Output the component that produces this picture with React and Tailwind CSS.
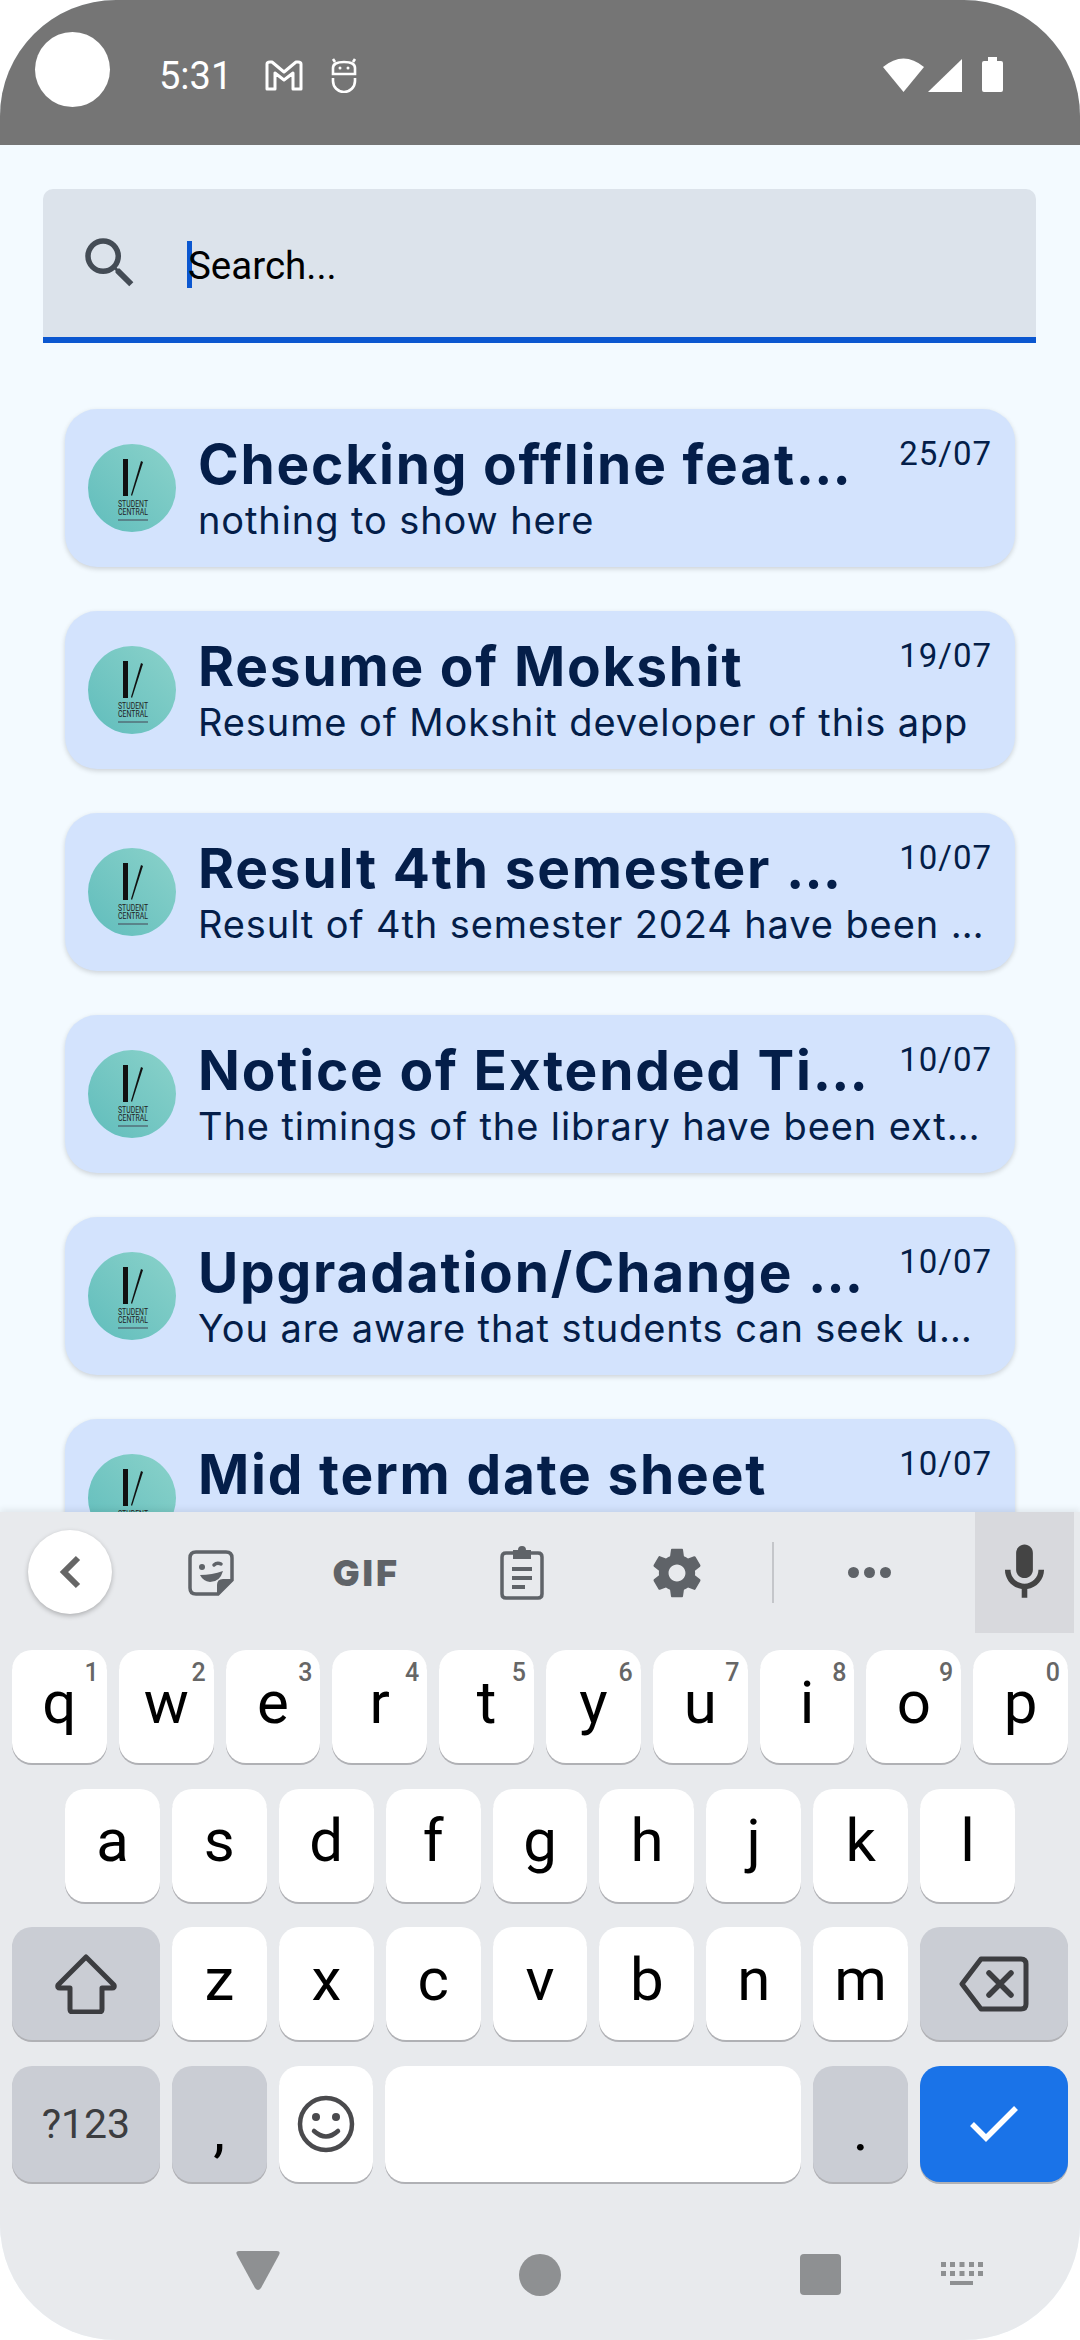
import React from 'react';

// --- data ---
const NOTICES = [
  { title: 'Checking offline feat…', body: 'nothing to show here', date: '25/07' },
  { title: 'Resume of Mokshit', body: 'Resume of Mokshit developer of this app', date: '19/07' },
  { title: 'Result 4th semester …', body: 'Result of 4th semester 2024 have been …', date: '10/07' },
  { title: 'Notice of Extended Ti…', body: 'The timings of the library have been ext…', date: '10/07' },
  { title: 'Upgradation/Change …', body: 'You are aware that students can seek u…', date: '10/07' },
  { title: 'Mid term date sheet', body: '', date: '10/07' }, // body sits behind the keyboard
];

const ROW_1 = [['q', '1'], ['w', '2'], ['e', '3'], ['r', '4'], ['t', '5'], ['y', '6'], ['u', '7'], ['i', '8'], ['o', '9'], ['p', '0']];
const ROW_2 = ['a', 's', 'd', 'f', 'g', 'h', 'j', 'k', 'l'];
const ROW_3 = ['z', 'x', 'c', 'v', 'b', 'n', 'm'];

// --- status bar ---
const StatusBar = () => (
  <div className="h-[145px] shrink-0 bg-[#757575] flex items-start text-white">
    <div className="ml-[35px] mt-[32px] w-[75px] h-[75px] rounded-full bg-white" />
    <span className="ml-[49px] mt-[54px] text-[38px] leading-[44px]">5:31</span>
    <svg className="ml-[33px] mt-[60px]" width="38" height="31" viewBox="0 0 38 31" fill="none" stroke="white" strokeWidth="3" strokeLinejoin="round">
      <path d="M2 4 Q2 2 5 2 H7 L19 12 L31 2 H33 Q36 2 36 4 V29 H28 V13 L19 20 L10 13 V29 H2 Z" />
    </svg>
    <svg className="ml-[28px] mt-[58px]" width="26" height="35" viewBox="0 0 26 35" fill="none" stroke="white" strokeWidth="2.6">
      <path d="M2 16 V10 Q2 4 13 4 Q24 4 24 10 V16 Z" />
      <path d="M2 20 V23 A11 11 0 0 0 24 23 V20" />
      <path d="M4 4 L2 1 M22 4 L24 1" />
      <circle cx="9" cy="10" r="1.5" fill="white" stroke="none" />
      <circle cx="17" cy="10" r="1.5" fill="white" stroke="none" />
    </svg>
    <div className="ml-auto mr-[77px] mt-[57px] flex items-start">
      <svg width="41" height="35" viewBox="0 0 41 35" fill="white">
        <path d="M0 10 Q20.5 -7 41 10 L20.5 35 Z" />
      </svg>
      <svg className="ml-[4px] mt-[2px]" width="34" height="33" viewBox="0 0 34 33" fill="white">
        <path d="M34 0 V33 H0 Z" />
      </svg>
      <svg className="ml-[20px]" width="21" height="35" viewBox="0 0 21 35" fill="white">
        <path d="M6 0 H15 V4 H19 Q21 4 21 6 V33 Q21 35 19 35 H2 Q0 35 0 33 V6 Q0 4 2 4 H6 Z" />
      </svg>
    </div>
  </div>
);

// --- search ---
const SearchBox = () => (
  <div className="ml-[43px] mr-[44px] h-[154px] shrink-0 bg-[#DCE3EB] rounded-t-[10px] border-b-[6px] border-[#0B57D0] flex items-center">
    <svg className="ml-[34px]" width="66" height="66" viewBox="0 0 24 24" fill="#444C55">
      <path d="M15.5 14h-.79l-.28-.27A6.471 6.471 0 0 0 16 9.5 6.5 6.5 0 1 0 9.5 16c1.61 0 3.09-.59 4.23-1.57l.27.28v.79l5 4.99L20.49 19l-4.99-5zm-6 0C7.01 14 5 11.99 5 9.5S7.01 5 9.5 5 14 7.01 14 9.5 11.99 14 9.5 14z" />
    </svg>
    <div className="relative ml-[44px] mt-[6px] flex items-center">
      <span className="absolute left-0 top-[-2px] w-[5px] h-[47px] bg-[#0B57D0]" />
      <span className="relative text-[38.5px] leading-[46px] text-black pl-[1px]">Search...</span>
    </div>
  </div>
);

// --- notice card ---
const LogoBadge = () => (
  <div className="w-[88px] h-[88px] shrink-0 rounded-full bg-linear-to-tr from-[#60BDBC] to-[#8AD2CA]">
    <svg width="88" height="88" viewBox="0 0 88 88">
      <rect x="35" y="15" width="5" height="37" fill="#111" />
      <path d="M53 17 L55 18 L44 52 L43 51 Z" fill="#111" />
      <text x="30" y="62.5" fontSize="8.5" textLength="30" lengthAdjust="spacingAndGlyphs" fontFamily="Roboto" fill="#222">STUDENT</text>
      <text x="30" y="71" fontSize="8.5" textLength="30" lengthAdjust="spacingAndGlyphs" fontFamily="Roboto" fill="#222">CENTRAL</text>
      <rect x="30" y="75.5" width="30" height="1" fill="#445" />
    </svg>
  </div>
);

const NoticeCard = ({ title, body, date }) => (
  <div className="h-[158px] shrink-0 rounded-[32px] bg-[#D3E3FD] shadow-[0_2px_5px_rgba(0,0,0,0.16)] flex items-center pl-[23px] pr-[23px]">
    <LogoBadge />
    <div className="ml-[22px] flex-1 min-w-0 text-[#041E49]">
      <div className="flex items-start justify-between">
        <span className="font-['Inter',sans-serif] font-bold text-[55px] leading-[62px] whitespace-nowrap tracking-[1.8px]">{title}</span>
        <span className="text-[33px] leading-[40px] tracking-[1px] mt-[1px]">{date}</span>
      </div>
      <div className="mt-[2px] h-[46px] font-['Inter',sans-serif] text-[38px] leading-[46px] whitespace-nowrap tracking-[0.9px]">{body}</div>
    </div>
  </div>
);

// --- keyboard ---
const Key = ({ label, hint, dark, blue, wide, children }) => (
  <div
    className={`relative h-full rounded-[20px] flex items-center justify-center shadow-[0_2px_0_#b0b1b5] ${
      blue ? 'bg-[#1A73E8]' : dark ? 'bg-[#CACDD4]' : 'bg-white'
    } ${wide ? 'flex-[1.56]' : 'flex-1'}`}
  >
    {label && <span className="text-[60px] leading-[60px] text-black pb-[8px]">{label}</span>}
    {hint && <span className="absolute top-[9px] right-[8px] text-[25px] leading-[28px] font-medium text-[#666]">{hint}</span>}
    {children}
  </div>
);

const ToolCell = ({ children }) => (
  <div className="w-[155.5px] flex items-center justify-center">{children}</div>
);

const Toolbar = () => (
  <div className="h-[121px] flex items-stretch">
    <div className="ml-[28px] self-start mt-[18px] w-[84px] h-[84px] rounded-full bg-white shadow-[0_2px_5px_rgba(0,0,0,0.25)] flex items-center justify-center">
      <svg width="22" height="34" viewBox="0 0 22 34" fill="none" stroke="#666" strokeWidth="6">
        <path d="M19 3 L5 17 L19 31" />
      </svg>
    </div>
    <div className="ml-[21px] flex items-stretch">
      <ToolCell>
        <svg width="46" height="46" viewBox="0 0 46 46" fill="none">
          <path d="M8 2 H38 Q44 2 44 8 V30 L30 44 H8 Q2 44 2 38 V8 Q2 2 8 2 Z" stroke="#5F6368" strokeWidth="3.5" />
          <path d="M44 29 L29 44 V35 Q29 29 35 29 Z" fill="#5F6368" />
          <circle cx="14" cy="17" r="3" fill="#5F6368" />
          <path d="M26 15 Q29 12 33 14" stroke="#5F6368" strokeWidth="3.5" strokeLinecap="round" />
          <path d="M12 25 Q24 25 35 21 Q32 32 22 32 Q15 31 12 25 Z" fill="#5F6368" />
        </svg>
      </ToolCell>
      <ToolCell>
        <span className="font-['Inter',sans-serif] font-black text-[36px] leading-[36px] text-[#5F6368] tracking-[3px]">GIF</span>
      </ToolCell>
      <ToolCell>
        <svg width="44" height="54" viewBox="0 0 44 54" fill="none">
          <path d="M6 7 H38 Q42 7 42 11 V48 Q42 52 38 52 H6 Q2 52 2 48 V11 Q2 7 6 7 Z" stroke="#5F6368" strokeWidth="3.5" />
          <path d="M13 4 H18 A4 4 0 0 1 26 4 H31 V13 H13 Z" fill="#5F6368" />
          <rect x="12" y="21" width="20" height="4" fill="#5F6368" />
          <rect x="12" y="30" width="20" height="4" fill="#5F6368" />
          <rect x="12" y="39" width="13" height="4" fill="#5F6368" />
        </svg>
      </ToolCell>
      <ToolCell>
        <svg width="58" height="58" viewBox="0 0 24 24" fill="#5F6368">
          <path d="M19.43 12.98c.04-.32.07-.64.07-.98s-.03-.66-.07-.98l2.11-1.65c.19-.15.24-.42.12-.64l-2-3.46c-.12-.22-.39-.3-.61-.22l-2.49 1c-.52-.4-1.08-.73-1.69-.98l-.38-2.65C14.46 2.18 14.25 2 14 2h-4c-.25 0-.46.18-.49.42l-.38 2.65c-.61.25-1.17.59-1.69.98l-2.49-1c-.23-.09-.49 0-.61.22l-2 3.46c-.13.22-.07.49.12.64l2.11 1.65c-.04.32-.07.65-.07.98s.03.66.07.98l-2.11 1.65c-.19.15-.24.42-.12.64l2 3.46c.12.22.39.3.61.22l2.49-1c.52.4 1.08.73 1.69.98l.38 2.65c.03.24.24.42.49.42h4c.25 0 .46-.18.49-.42l.38-2.65c.61-.25 1.17-.59 1.69-.98l2.49 1c.23.09.49 0 .61-.22l2-3.46c.12-.22.07-.49-.12-.64l-2.11-1.65zM12 15.5c-1.93 0-3.5-1.57-3.5-3.5s1.57-3.5 3.5-3.5 3.5 1.57 3.5 3.5-1.57 3.5-3.5 3.5z" />
        </svg>
      </ToolCell>
    </div>
    <div className="ml-[17px] w-[2px] h-[61px] mt-[30px] bg-[#C4C6CA]" />
    <div className="w-[190px] flex items-center justify-center gap-[5px]">
      <span className="w-[11px] h-[11px] rounded-full bg-[#5F6368]" />
      <span className="w-[11px] h-[11px] rounded-full bg-[#5F6368]" />
      <span className="w-[11px] h-[11px] rounded-full bg-[#5F6368]" />
    </div>
    <div className="ml-[11px] w-[99px] bg-[#D8D9DD] flex items-center justify-center">
      <svg width="67" height="67" viewBox="0 0 24 24" fill="#444">
        <path d="M12 14c1.66 0 3-1.34 3-3V5c0-1.66-1.34-3-3-3S9 3.34 9 5v6c0 1.66 1.34 3 3 3z" />
        <path d="M17 11c0 2.76-2.24 5-5 5s-5-2.24-5-5H5c0 3.53 2.61 6.43 6 6.92V21h2v-3.08c3.39-.49 6-3.39 6-6.92h-2z" />
      </svg>
    </div>
  </div>
);

const Keyboard = () => (
  <div className="h-[828px] shrink-0 bg-[#E8EAED] relative shadow-[0_-3px_6px_rgba(0,0,0,0.07)] flex flex-col">
    <Toolbar />
    <div className="mt-[17px] flex flex-col gap-[25.5px]">
      <div className="h-[113px] px-[12px] flex gap-[12px]">
        {ROW_1.map(([k, n]) => <Key key={k} label={k} hint={n} />)}
      </div>
      <div className="h-[113px] px-[65px] flex gap-[12px]">
        {ROW_2.map((k) => <Key key={k} label={k} />)}
      </div>
      <div className="h-[113px] px-[12px] flex gap-[12px]">
        <Key dark wide>
          <svg width="62" height="60" viewBox="0 0 62 60" fill="none" stroke="#3C3D40" strokeWidth="5" strokeLinejoin="round">
            <path d="M31 3 L59 31 Q60 34 57 34 H47 V55 Q47 58 44 58 H18 Q15 58 15 55 V34 H5 Q2 34 3 31 Z" />
          </svg>
        </Key>
        {ROW_3.map((k) => <Key key={k} label={k} />)}
        <Key dark wide>
          <svg width="70" height="56" viewBox="0 0 70 56" fill="none" stroke="#3C3D40" strokeWidth="5" strokeLinejoin="round">
            <path d="M22 3 H62 Q67 3 67 8 V48 Q67 53 62 53 H22 L3 28 Z" />
            <path d="M30 17 L52 39 M52 17 L30 39" strokeLinecap="round" strokeWidth="5.5" />
          </svg>
        </Key>
      </div>
      <div className="h-[116px] px-[12px] flex gap-[12px]">
        <Key dark wide>
          <span className="text-[41px] leading-[46px] text-[#3C3D40]">?123</span>
        </Key>
        <Key dark>
          <span className="text-[60px] leading-[60px] text-black mt-[12px]">,</span>
        </Key>
        <Key>
          <svg width="58" height="58" viewBox="0 0 58 58" fill="none" stroke="#4A4A4D" strokeWidth="4.5">
            <circle cx="29" cy="29" r="26" />
            <circle cx="19" cy="22" r="4" fill="#4A4A4D" stroke="none" />
            <circle cx="39" cy="22" r="4" fill="#4A4A4D" stroke="none" />
            <path d="M17 36 Q29 47 41 36" strokeLinecap="round" />
          </svg>
        </Key>
        <div className="h-full w-[416px] rounded-[20px] bg-white shadow-[0_2px_0_#b0b1b5]" />
        <Key dark>
          <span className="text-[60px] leading-[60px] text-black mt-[12px]">.</span>
        </Key>
        <Key blue wide>
          <svg width="48" height="38" viewBox="0 0 48 38" fill="none" stroke="white" strokeWidth="5.5">
            <path d="M2 19 L16 33 L46 3" />
          </svg>
        </Key>
      </div>
    </div>
    <div className="mt-[69px] flex items-start">
      <svg className="ml-[236px]" width="44" height="40" viewBox="0 0 44 40" fill="#8E9092">
        <path d="M3 0 H41 Q45 0 43 4 L25 37 Q22 41 19 37 L1 4 Q-1 0 3 0 Z" />
      </svg>
      <div className="ml-[239px] mt-[3px] w-[42px] h-[42px] rounded-full bg-[#8E9092]" />
      <div className="ml-[239px] mt-[3px] w-[41px] h-[41px] rounded-[4px] bg-[#8E9092]" />
      <svg className="ml-[100px] mt-[11px]" width="42" height="24" viewBox="0 0 42 24" fill="#8E9092">
        <rect x="0" y="0" width="5" height="5" /><rect x="9" y="0" width="5" height="5" /><rect x="18.5" y="0" width="5" height="5" /><rect x="28" y="0" width="5" height="5" /><rect x="37" y="0" width="5" height="5" />
        <rect x="0" y="9" width="5" height="5" /><rect x="9" y="9" width="5" height="5" /><rect x="18.5" y="9" width="5" height="5" /><rect x="28" y="9" width="5" height="5" /><rect x="37" y="9" width="5" height="5" />
        <rect x="9" y="19" width="23" height="4" />
      </svg>
    </div>
  </div>
);

const App = () => (
  <div className="w-[1080px] h-[2340px] bg-white overflow-hidden font-['Roboto',sans-serif]">
    <div className="w-full h-full rounded-[116px] overflow-hidden flex flex-col bg-[#F3FAFF]">
      <StatusBar />
      <main className="flex-1 min-h-0 overflow-hidden pt-[44px] flex flex-col">
        <SearchBox />
        <div className="mt-[66px] ml-[65px] mr-[65px] flex flex-col gap-[44px]">
          {NOTICES.map((n) => <NoticeCard key={n.title} {...n} />)}
        </div>
      </main>
      <Keyboard />
    </div>
  </div>
);

export default App;
